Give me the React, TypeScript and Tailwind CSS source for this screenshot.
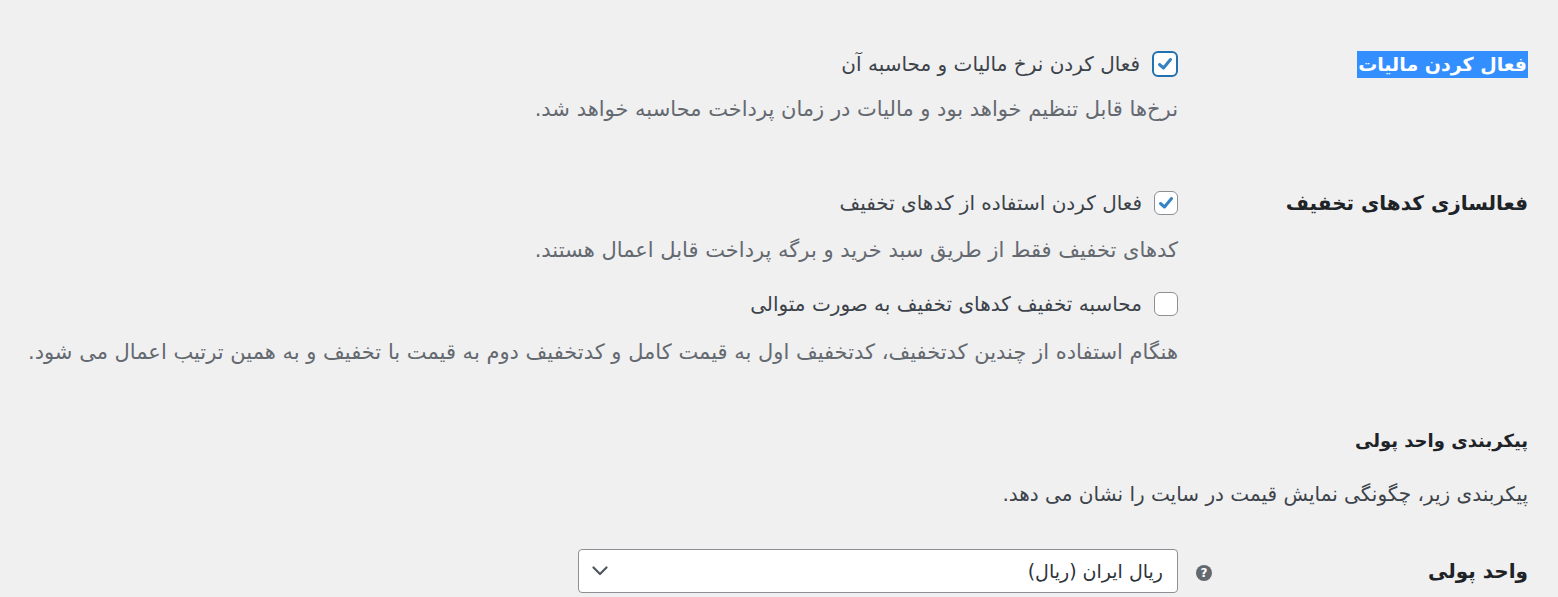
import React from 'react';

// Settings page (RTL) – tax / coupons / currency options
const FONT = "font-['Tahoma','DejaVu_Sans',sans-serif]";

interface CheckboxProps {
  checked?: boolean;
  focused?: boolean;
}

function Checkbox({ checked = false, focused = false }: CheckboxProps) {
  return (
    <span
      className={
        focused
          ? 'flex h-[26px] w-[26px] shrink-0 items-center justify-center rounded-[6px] border-2 border-[#2271b1] bg-white'
          : 'flex h-[24px] w-[24px] shrink-0 items-center justify-center rounded-[6px] border border-[#8c8f94] bg-white'
      }
    >
      {checked && (
        <svg width="18" height="18" viewBox="0 0 18 18">
          <path d="M3.5 9.5 L7.5 13 L14.5 4.5" fill="none" stroke="#3582c4" strokeWidth="3" strokeLinecap="round" strokeLinejoin="round" />
        </svg>
      )}
    </span>
  );
}

function CheckLine({ text, checked, focused }: { text: string; checked?: boolean; focused?: boolean }) {
  return (
    <div className="flex h-[28px] items-center gap-[12px] text-[20px] text-[#3c434a]">
      <Checkbox checked={checked} focused={focused} />
      <span>{text}</span>
    </div>
  );
}

function Desc({ text, className = '' }: { text: string; className?: string }) {
  return <div className={`flex h-[28px] items-center whitespace-nowrap text-[21px] text-[#646970] ${className}`}>{text}</div>;
}

export default function App() {
  return (
    <div dir="rtl" className={`min-h-[597px] w-full overflow-hidden bg-[#f0f0f1] pr-[30px] ${FONT}`}>
      {/* Tax */}
      <div className="grid grid-cols-[350px_1fr] pt-[50px]">
        <div className="flex h-[28px] items-center">
          <span className="bg-[#338fff] px-px text-[19px] font-bold leading-[27px] text-white">فعال کردن مالیات</span>
        </div>
        <div>
          <CheckLine text="فعال کردن نرخ مالیات و محاسبه آن" checked focused />
          <Desc text="نرخ‌ها قابل تنظیم خواهد بود و مالیات در زمان پرداخت محاسبه خواهد شد." className="mt-[18px]" />
        </div>
      </div>

      {/* Coupons */}
      <div className="mt-[65px] grid grid-cols-[350px_1fr]">
        <div className="flex h-[28px] items-center text-[20px] font-bold text-[#1d2327]">فعالسازی کدهای تخفیف</div>
        <div>
          <CheckLine text="فعال کردن استفاده از کدهای تخفیف" checked />
          <Desc text="کدهای تخفیف فقط از طریق سبد خرید و برگه پرداخت قابل اعمال هستند." className="mt-[20px]" />
          <div className="mt-[25px]">
            <CheckLine text="محاسبه تخفیف کدهای تخفیف به صورت متوالی" />
          </div>
          <Desc
            text="هنگام استفاده از چندین کدتخفیف، کدتخفیف اول به قیمت کامل و کدتخفیف دوم به قیمت با تخفیف و به همین ترتیب اعمال می شود."
            className="mt-[21px]"
          />
        </div>
      </div>

      {/* Currency options */}
      <h2 className="mt-[59px] flex h-[28px] items-center text-[18px] font-bold text-[#1d2327]">پیکربندی واحد پولی</h2>
      <div className="mt-[26px] flex h-[28px] items-center text-[20px] text-[#3c434a]">
        پیکربندی زیر، چگونگی نمایش قیمت در سایت را نشان می دهد.
      </div>

      <div className="mt-[41px] grid grid-cols-[350px_1fr] items-center">
        <div className="flex items-center justify-between">
          <span className="text-[20px] font-bold text-[#1d2327]">واحد پولی</span>
          <span className="ml-[18px] mt-[4px] flex h-[16px] w-[16px] items-center justify-center rounded-full bg-[#646970] text-[12px] font-bold leading-none text-white">
            ?
          </span>
        </div>
        <div className="flex h-[44px] w-[600px] items-center justify-between rounded-[4px] border border-[#8c8f94] bg-white pl-[13px] pr-[14px] text-[19px] text-[#2c3338]">
          <span>ریال ایران (ریال)</span>
          <svg width="16" height="10" viewBox="0 0 16 10">
            <path d="M1.5 1.5 L8 8 L14.5 1.5" fill="none" stroke="#50575e" strokeWidth="2.2" strokeLinecap="round" strokeLinejoin="round" />
          </svg>
        </div>
      </div>
    </div>
  );
}
